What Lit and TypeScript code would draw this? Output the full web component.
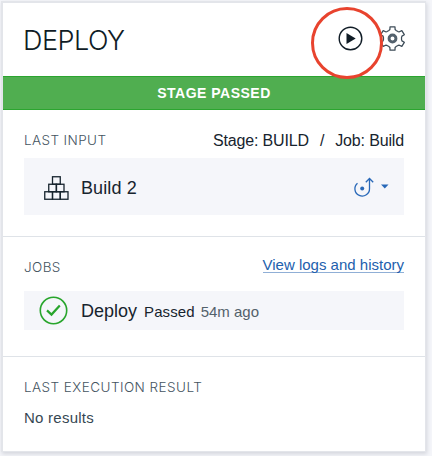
import { LitElement, html, css, svg } from "lit";
import { customElement } from "lit/decorators.js";

const gear = (() => {
  const teeth = 6;
  const pts: string[] = [];
  for (let i = 0; i < teeth; i++) {
    const base = (i * 2 * Math.PI) / teeth - Math.PI / 2;
    for (const [off, r] of [[-0.4, 8.4], [-0.27, 9], [-0.2, 11.5], [0.2, 11.5], [0.27, 9], [0.4, 8.4]]) {
      pts.push(`${(12 + r * Math.cos(base + off) * 1.04).toFixed(2)} ${(12 + r * Math.sin(base + off)).toFixed(2)}`);
    }
  }
  return `M${pts.join("L")}Z`;
})();

const blocks = [[8.5, 0.75], [4.75, 8.25], [12.25, 8.25], [0.75, 15.75], [8.5, 15.75], [16.25, 15.75]];

@customElement("app-root")
export class AppRoot extends LitElement {
  static styles = css`
    :host { display: block; box-sizing: border-box; height: 456px; padding: 1px 6px 4px 1px; background: #f4f5f9; overflow: hidden;
      font-family: "Liberation Sans", Arial, sans-serif; color: #17242e; }
    * { box-sizing: border-box; }
    svg { display: block; fill: none; flex: none; }
    .card { height: 451px; background: #fff; border: 2px solid #e3e5ea; border-right-width: 1px; border-bottom-width: 1px; box-shadow: 1px 2px 4px #d3d5dc; }
    .head { height: 73px; display: flex; align-items: center; padding: 0 20px 0 21px; justify-content: space-between; }
    .title { font: 300 27px/30px Inter, sans-serif; letter-spacing: -0.5px; margin: 3px 0 0 -1px; color: #101c26; white-space: nowrap; }
    .tools { display: flex; gap: 17px; align-items: center; margin-top: -2px; }
    .run { position: relative; }
    .ring { position: absolute; left: -27px; top: -19px; width: 72px; height: 72px; border: 3px solid #e8432e; border-radius: 50%; }
    .status { height: 34px; background: #50ae50; border: solid #2ba52f; border-width: 1px 0; color: #fff; font-weight: bold; font-size: 14px; line-height: 33px; letter-spacing: 0.5px; text-align: center; }
    .section { padding: 0 21px; border-bottom: 1px solid #dfe3e8; }
    .input { height: 127px; }
    .jobs { height: 120px; }
    .result { border: 0; }
    .row { display: flex; justify-content: space-between; }
    .label { font: 300 13.5px/18px Inter, sans-serif; letter-spacing: 0.4px; color: #45545f; white-space: nowrap; }
    .source { font-size: 16px; line-height: 20px; letter-spacing: -0.15px; white-space: nowrap; }
    .slash { margin: 0 11px; }
    .box { display: flex; align-items: center; background: #f5f6fa; }
    .input .row { padding-top: 21px; }
    .input .box { height: 57px; margin-top: 7px; padding: 3px 15px 0 20px; }
    .name { font-size: 18px; line-height: 20px; white-space: nowrap; }
    .build { margin-left: 12px; flex: 1; letter-spacing: 0.1px; }
    .jobs .row { padding-top: 19px; }
    .jobs .label { padding-top: 2px; }
    .link { font-size: 15px; line-height: 18px; color: #2260ad; border-bottom: 1px solid #90afd6; height: 17px; white-space: nowrap; }
    .jobs .box { height: 39px; margin-top: 15px; padding: 1px 15px; }
    .text { display: flex; align-items: baseline; margin-left: 13px; }
    .passed { font-size: 15px; margin-left: 7px; letter-spacing: 0.1px; }
    .ago { font-size: 15px; margin-left: 6px; color: #53616b; }
    .result .label { padding-top: 21px; letter-spacing: 0.45px; }
    .none { margin-top: 13px; font-size: 15px; line-height: 18px; letter-spacing: 0.25px; color: #364753; }
  `;

  render() {
    return html`<div class="card">
      <div class="head">
        <div class="title">DEPLOY</div>
        <div class="tools">
          <div class="run">
            <svg width="25" height="25" viewBox="0 0 25 25"><circle cx="12.5" cy="12.5" r="11.3" stroke="#101c26" stroke-width="1.4"/><path d="M8.5 7.1 17.7 12.5 8.5 17.9Z" fill="#101c26"/></svg>
            <div class="ring"></div>
          </div>
          <svg width="25" height="25" viewBox="0 0 24 24"><path d=${gear} stroke="#3c4b57" stroke-width="1.2" stroke-linejoin="round"/><circle cx="12" cy="12" r="3.3" stroke="#53616d" stroke-width="2.8"/></svg>
        </div>
      </div>
      <div class="status">STAGE PASSED</div>
      <div class="section input">
        <div class="row"><span class="label">LAST INPUT</span><span class="source">Stage: BUILD<span class="slash">/</span>Job: Build</span></div>
        <div class="box">
          <svg width="25" height="25" viewBox="0 0 25 25">${blocks.map(([x, y]) => svg`<rect x=${x} y=${y} width="7.75" height="7.5" stroke="#17242e" stroke-width="1.3"/>`)}</svg>
          <span class="name build">Build 2</span>
          <svg width="36" height="22" viewBox="0 0 36 22"><path d="M4.5 6.2A7.3 7.3 0 1 0 16.5 11.5V1.5M12.8 5.2 16.5 1.5 20.2 5.2" stroke="#2868b8" stroke-width="1.3"/><circle cx="9.2" cy="11.5" r="2" fill="#2868b8"/><path d="M28 7.5h7.5l-3.75 4z" fill="#2868b8"/></svg>
        </div>
      </div>
      <div class="section jobs">
        <div class="row"><span class="label">JOBS</span><span class="link">View logs and history</span></div>
        <div class="box">
          <svg width="29" height="29" viewBox="0 0 29 29"><circle cx="14.5" cy="14.5" r="13.2" stroke="#28a52c" stroke-width="1.6"/><path d="M8 14.4 12.5 18.6 20.8 9.5" stroke="#28a52c" stroke-width="2.2"/></svg>
          <div class="text"><span class="name">Deploy</span><span class="passed">Passed</span><span class="ago">54m ago</span></div>
        </div>
      </div>
      <div class="section result">
        <div class="label">LAST EXECUTION RESULT</div>
        <div class="none">No results</div>
      </div>
    </div>`;
  }
}
